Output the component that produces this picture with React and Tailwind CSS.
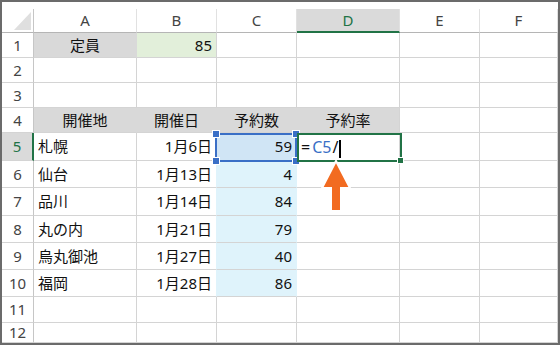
import React from 'react';

const FONT = { fontFamily: '"Noto Sans", "Noto Sans CJK JP", sans-serif' };

// column widths of the sheet (row header first)
const COLS = [
  { key: 'A', w: 'w-[103px]' },
  { key: 'B', w: 'w-[80px]' },
  { key: 'C', w: 'w-[80px]' },
  { key: 'D', w: 'w-[103px]' },
  { key: 'E', w: 'w-[80px]' },
  { key: 'F', w: 'w-[78px]' },
];

const BLUE = 'border-b-[#55a0da]';

const venues = [
  { place: '札幌', date: '1月6日', count: 59 },
  { place: '仙台', date: '1月13日', count: 4 },
  { place: '品川', date: '1月14日', count: 84 },
  { place: '丸の内', date: '1月21日', count: 79 },
  { place: '烏丸御池', date: '1月27日', count: 40 },
  { place: '福岡', date: '1月28日', count: 86 },
];

const rowHeights = ['h-[28px]', 'h-[27px]', 'h-[28px]', 'h-[27px]', 'h-[27px]', 'h-[27px]'];

function Cell({ w, className = '', children }) {
  return (
    <div
      className={`${w} shrink-0 h-full flex items-center border-r border-b border-r-[#d4d4d4] border-b-[#d4d4d4] px-[4px] whitespace-nowrap overflow-visible ${className}`}
    >
      {children}
    </div>
  );
}

function RowHead({ n, active }) {
  return (
    <div
      className={`w-[32px] shrink-0 h-full flex items-center justify-center border-b border-b-[#d4d4d4] ${
        active
          ? 'bg-[#dadada] text-[#217346] border-r-2 border-r-[#217346]'
          : 'text-[#444] border-r border-r-[#c6c6c6]'
      }`}
    >
      {n}
    </div>
  );
}

function Row({ h, children }) {
  return <div className={`flex ${h}`}>{children}</div>;
}

function PlainCells({ from = 0, blueUntil = -1 }) {
  return COLS.slice(from).map((c, i) => (
    <Cell key={c.key} w={c.w} className={from + i <= blueUntil ? BLUE : ''} />
  ));
}

export default function App() {
  return (
    <div className="w-[560px] h-[345px] border-2 border-[#6b6b6b] bg-white overflow-hidden text-[15px] text-[#111]" style={FONT}>
      <div className="relative w-[556px] h-[341px]">
        <div className="h-[7px]" />

        {/* column headers */}
        <div className="flex h-[24px]">
          <div className="w-[32px] shrink-0 h-full border-r border-b border-r-[#c6c6c6] border-b-[#b5b5b5]">
            <svg width="31" height="23" viewBox="0 0 31 23">
              <polygon points="29,3 29,21 12,21" fill="#dfdfdf" />
            </svg>
          </div>
          {COLS.map((c) =>
            c.key === 'D' ? (
              <div
                key={c.key}
                className={`${c.w} shrink-0 h-full flex items-center justify-center bg-[#dadada] text-[#217346] border-r border-r-[#e1e1e1] border-b-2 border-b-[#217346]`}
              >
                {c.key}
              </div>
            ) : (
              <div
                key={c.key}
                className={`${c.w} shrink-0 h-full flex items-center justify-center text-[#444] border-r border-b border-r-[#e1e1e1] border-b-[#b5b5b5]`}
              >
                {c.key}
              </div>
            )
          )}
        </div>

        {/* 1: capacity */}
        <Row h="h-[25px]">
          <RowHead n={1} />
          <Cell w="w-[103px]" className={`justify-center bg-[#d9d9d9] border-r-[#d9d9d9] ${BLUE}`}>定員</Cell>
          <Cell w="w-[80px]" className={`justify-end bg-[#e2efda] ${BLUE}`}>85</Cell>
          <PlainCells from={2} />
        </Row>
        <Row h="h-[25px]">
          <RowHead n={2} />
          <PlainCells />
        </Row>
        <Row h="h-[25px]">
          <RowHead n={3} />
          <PlainCells blueUntil={3} />
        </Row>

        {/* 4: table header */}
        <Row h="h-[25px]">
          <RowHead n={4} />
          <Cell w="w-[103px]" className={`justify-center bg-[#d9d9d9] border-r-[#d9d9d9] ${BLUE}`}>開催地</Cell>
          <Cell w="w-[80px]" className={`justify-center bg-[#d9d9d9] border-r-[#d9d9d9] ${BLUE}`}>開催日</Cell>
          <Cell w="w-[80px]" className={`justify-center bg-[#d9d9d9] border-r-[#d9d9d9] ${BLUE}`}>予約数</Cell>
          <Cell w="w-[103px]" className={`justify-center bg-[#d9d9d9] ${BLUE}`}>予約率</Cell>
          <PlainCells from={4} />
        </Row>

        {venues.map((v, i) => (
          <Row key={v.place} h={rowHeights[i]}>
            <RowHead n={i + 5} active={i === 0} />
            <Cell w="w-[103px]" className={BLUE}>{v.place}</Cell>
            <Cell w="w-[80px]" className={`justify-end border-r-[#dff3fb] ${BLUE}`}>{v.date}</Cell>
            <Cell
              w="w-[80px]"
              className={`justify-end ${i === 0 ? 'bg-[#d0e5f5] border-r-[#d0e5f5]' : 'bg-[#dff3fb] border-r-[#dff3fb]'} ${BLUE}`}
            >
              {v.count}
            </Cell>
            <Cell w="w-[103px]" className={`${BLUE} text-[16px]`}>
              {i === 0 && (
                <>
                  <span className="mr-[2px]">=</span>
                  <span className="text-[#3a6fc6]">C5</span>
                  <span className="ml-[1px]">/</span>
                  <span className="inline-block w-[1.5px] h-[18px] bg-black ml-[1px] mt-[4px]" />
                </>
              )}
            </Cell>
            <PlainCells from={4} />
          </Row>
        ))}

        <Row h="h-[26px]">
          <RowHead n={11} />
          <PlainCells />
        </Row>
        <Row h="h-[20px]">
          <RowHead n={12} />
          <PlainCells />
        </Row>

        {/* reference box on C5 with its corner handles */}
        <div className="absolute left-[213px] top-[131px] w-[82px] h-[29px] border-2 border-[#3a6fc6]" />
        <div className="absolute left-[210px] top-[128px] w-[8px] h-[8px] bg-[#3a6fc6] border border-white" />
        <div className="absolute left-[290px] top-[128px] w-[8px] h-[8px] bg-[#3a6fc6] border border-white" />
        <div className="absolute left-[210px] top-[155px] w-[8px] h-[8px] bg-[#3a6fc6] border border-white" />
        <div className="absolute left-[290px] top-[155px] w-[8px] h-[8px] bg-[#3a6fc6] border border-white" />

        {/* active cell D5 */}
        <div className="absolute left-[295px] top-[131px] w-[105px] h-[29px] border-2 border-[#217346]" />
        <div className="absolute left-[395px] top-[155px] w-[7px] h-[7px] bg-[#217346] border border-white" />

        {/* pointer arrow */}
        <svg className="absolute left-[318px] top-[156px]" width="34" height="56" viewBox="0 0 34 56">
          <polygon
            points="16,3 30,30 21,30 21,53 11,53 11,30 2,30"
            fill="#f26b21"
            stroke="#fff"
            strokeWidth="2"
            strokeLinejoin="miter"
          />
        </svg>
      </div>
    </div>
  );
}
